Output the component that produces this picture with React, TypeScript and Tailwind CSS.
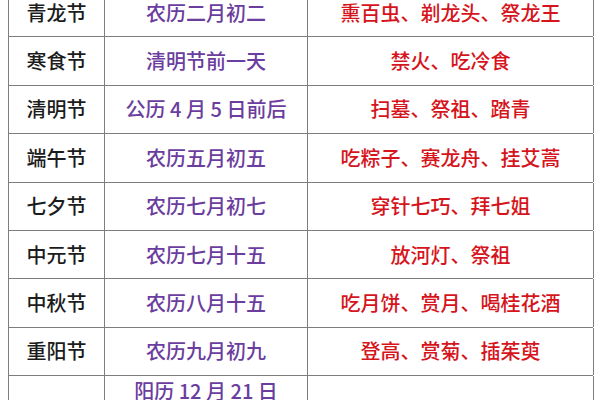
import React from "react";

const rows: [string, string, string][] = [
  ["青龙节", "农历二月初二", "熏百虫、剃龙头、祭龙王"],
  ["寒食节", "清明节前一天", "禁火、吃冷食"],
  ["清明节", "公历 4 月 5 日前后", "扫墓、祭祖、踏青"],
  ["端午节", "农历五月初五", "吃粽子、赛龙舟、挂艾蒿"],
  ["七夕节", "农历七月初七", "穿针七巧、拜七姐"],
  ["中元节", "农历七月十五", "放河灯、祭祖"],
  ["中秋节", "农历八月十五", "吃月饼、赏月、喝桂花酒"],
  ["重阳节", "农历九月初九", "登高、赏菊、插茱萸"],
];

export default function App() {
  return (
    <div
      className="w-[600px] h-[400px] overflow-hidden bg-white"
      style={{ fontFamily: '"Noto Sans CJK SC", "Noto Sans", sans-serif' }}
    >
      <div className="ml-[8px] -mt-[12px] w-[585px] border-l border-t border-[#7d7d7d]">
        {rows.map(([a, b, c], i) => (
          <div
            key={i}
            className="grid grid-cols-[96px_203px_286px] h-[48.4px] border-b border-[#7d7d7d] text-[20px] leading-none"
          >
            <div className="flex items-center justify-center border-r border-[#7d7d7d] text-[#1c1c1c] font-medium">
              {a}
            </div>
            <div className="flex items-center justify-center border-r border-[#7d7d7d] text-[#6b3d9e] font-medium">
              {b}
            </div>
            <div className="flex items-center justify-center border-r border-[#7d7d7d] text-[#d5141c] font-medium">
              {c}
            </div>
          </div>
        ))}
        <div className="grid grid-cols-[96px_203px_286px] h-[68px] border-b border-[#7d7d7d] text-[20px] leading-none">
          <div className="flex items-center justify-center border-r border-[#7d7d7d] text-[#1c1c1c] font-medium">
            冬至节
          </div>
          <div className="flex flex-col items-center justify-start pt-[5px] gap-[8px] border-r border-[#7d7d7d] text-[#6b3d9e] font-medium">
            <span>阳历 12 月 21 日</span>
            <span>或 22 日</span>
          </div>
          <div className="flex items-center justify-center border-r border-[#7d7d7d] text-[#d5141c] font-medium">
            吃饺子、祭祖
          </div>
        </div>
      </div>
    </div>
  );
}
